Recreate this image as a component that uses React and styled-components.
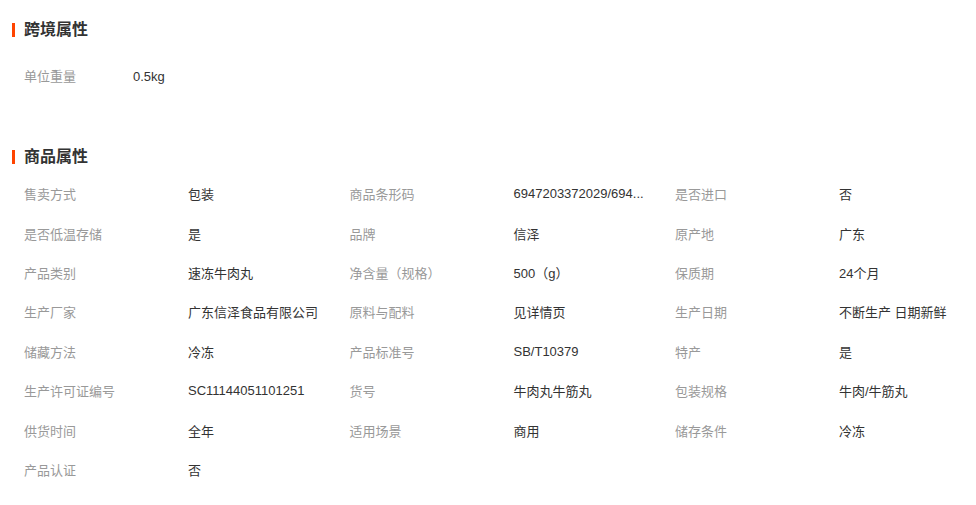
import React from "react";
import styled, { createGlobalStyle } from "styled-components";

const GlobalStyle = createGlobalStyle`
  body {
    margin: 0;
    background: #fff;
    font-family: "Liberation Sans", Arial, "Noto Sans CJK SC", sans-serif;
    font-size: 13px;
    color: #333;
  }
`;

const crossBorder = [{ label: "单位重量", value: "0.5kg" }];

// barcode is cut short on the page the same way the shop shows it
const attrs = [
  ["售卖方式", "包装"],
  ["商品条形码", "6947203372029/694..."],
  ["是否进口", "否"],
  ["是否低温存储", "是"],
  ["品牌", "信泽"],
  ["原产地", "广东"],
  ["产品类别", "速冻牛肉丸"],
  ["净含量（规格）", "500（g）"],
  ["保质期", "24个月"],
  ["生产厂家", "广东信泽食品有限公司"],
  ["原料与配料", "见详情页"],
  ["生产日期", "不断生产 日期新鲜"],
  ["储藏方法", "冷冻"],
  ["产品标准号", "SB/T10379"],
  ["特产", "是"],
  ["生产许可证编号", "SC11144051101251"],
  ["货号", "牛肉丸牛筋丸"],
  ["包装规格", "牛肉/牛筋丸"],
  ["供货时间", "全年"],
  ["适用场景", "商用"],
  ["储存条件", "冷冻"],
  ["产品认证", "否"],
];

export default function App() {
  return (
    <Page>
      <GlobalStyle />
      <Section>
        <Title>跨境属性</Title>
        <CrossList>
          {crossBorder.map((a) => (
            <CrossRow key={a.label}>
              <CrossLabel>{a.label}</CrossLabel>
              <Value>{a.value}</Value>
            </CrossRow>
          ))}
        </CrossList>
      </Section>
      <Section $gap={60}>
        <Title>商品属性</Title>
        <Grid>
          {attrs.map(([label, value]) => (
            <Cell key={label}>
              <Label>{label}</Label>
              <Value>{value}</Value>
            </Cell>
          ))}
        </Grid>
      </Section>
    </Page>
  );
}

const Page = styled.div`
  width: 976px;
  padding-top: 20px;
`;

const Section = styled.section`
  margin-top: ${(p) => p.$gap || 0}px;
`;

const Title = styled.h3`
  position: relative;
  margin: 0;
  padding-left: 24px;
  height: 20px;
  line-height: 20px;
  font-size: 16px;
  font-weight: bold;
  color: #333;

  &::before {
    content: "";
    position: absolute;
    left: 12px;
    top: 3px;
    width: 3px;
    height: 14px;
    background: #ff4400;
  }
`;

const CrossList = styled.div`
  margin-top: 27px;
  padding-left: 24px;
`;

const CrossRow = styled.div`
  display: flex;
  height: 20px;
  line-height: 20px;
`;

const CrossLabel = styled.span`
  width: 109px;
  color: #999;
`;

const Grid = styled.div`
  margin-top: 7px;
  padding-left: 24px;
  display: grid;
  grid-template-columns: repeat(3, 325.5px);
  grid-auto-rows: 39.43px;
`;

const Cell = styled.div`
  display: flex;
  align-items: center;
  min-width: 0;
`;

const Label = styled.span`
  flex: 0 0 164px;
  color: #999;
`;

const Value = styled.span`
  color: #333;
  white-space: nowrap;
`;
